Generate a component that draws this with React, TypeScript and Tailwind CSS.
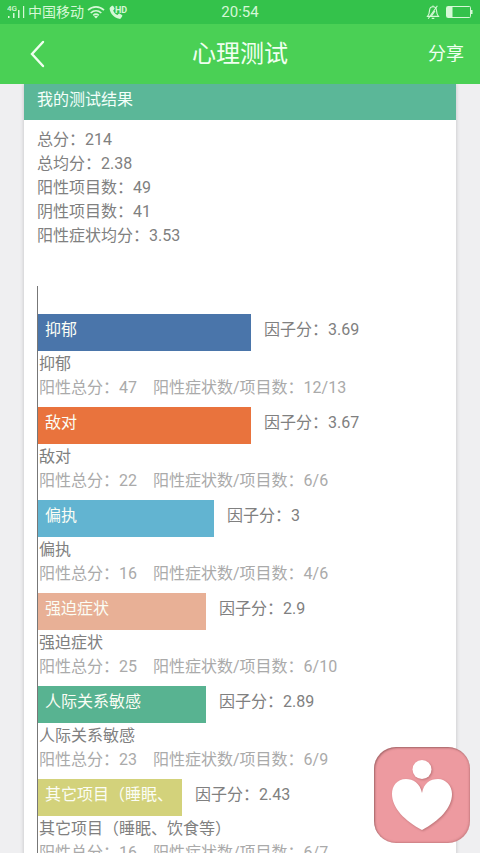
type Factor = {
  name: string;
  barLabel?: string;
  score: string;
  total: number;
  ratio: string;
  width: number;
  color: string;
};

const summary = [
  { label: "总分", value: "214" },
  { label: "总均分", value: "2.38" },
  { label: "阳性项目数", value: "49" },
  { label: "阴性项目数", value: "41" },
  { label: "阳性症状均分", value: "3.53" },
];

const factors: Factor[] = [
  { name: "抑郁", score: "3.69", total: 47, ratio: "12/13", width: 53.25, color: "bg-[#4a75aa]" },
  { name: "敌对", score: "3.67", total: 22, ratio: "6/6", width: 53.25, color: "bg-[#e9733d]" },
  { name: "偏执", score: "3", total: 16, ratio: "4/6", width: 44, color: "bg-[#62b4d1]" },
  { name: "强迫症状", score: "2.9", total: 25, ratio: "6/10", width: 42, color: "bg-[#e8b096]" },
  { name: "人际关系敏感", score: "2.89", total: 23, ratio: "6/9", width: 42, color: "bg-[#58b391]" },
  {
    name: "其它项目（睡眠、饮食等）",
    barLabel: "其它项目（睡眠、",
    score: "2.43",
    total: 16,
    ratio: "6/7",
    width: 36,
    color: "bg-[#d3d27b]",
  },
];

const SignalIcon = () => (
  <svg width="18" height="16" viewBox="0 0 18 16" fill="currentColor" aria-hidden="true">
    <text x="0" y="7" fontSize="8" fontWeight="500" fontFamily="Roboto, sans-serif">
      4G
    </text>
    <rect x="1" y="12" width="1.5" height="2" />
    <rect x="6" y="9" width="1.5" height="5" />
    <rect x="11" y="6" width="1.5" height="8" />
    <rect x="16" y="2" width="1.2" height="12" />
  </svg>
);

const WifiIcon = () => (
  <svg width="18" height="14" viewBox="0 0 18 14" fill="none" stroke="currentColor" strokeWidth="1.7" aria-hidden="true">
    <path d="M1 5.2C5.6 .7 12.4 .7 17 5.2" />
    <path d="M3.7 8c3.2-3 7.4-3 10.6 0" />
    <path d="M6.2 10.4c1.7-1.5 3.9-1.5 5.6 0" />
    <path d="M9 13.4 7 11.4c1.2-1 2.8-1 4 0z" fill="currentColor" stroke="none" />
  </svg>
);

const CallIcon = () => (
  <svg width="19" height="15" viewBox="0 0 19 15" fill="currentColor" aria-hidden="true">
    <path d="M1.2 2.2 3 .8c.4-.3.9-.2 1.2.2l1.3 2.2c.2.4.1.8-.2 1.1L4.2 5.5c.8 2 2.2 3.5 4.2 4.5l1.3-1.2c.3-.3.8-.3 1.1-.1l2.2 1.4c.4.3.5.8.2 1.2l-1.3 1.9c-.4.6-1 .8-1.7.6C5 12.6 1.5 9 .6 4c-.1-.7.1-1.4.6-1.8z" />
    <text x="6" y="8" fontSize="9" fontWeight="700" fontFamily="Roboto, sans-serif">
      HD
    </text>
  </svg>
);

const MutedBellIcon = () => (
  <svg width="14" height="15" viewBox="0 0 14 15" fill="none" stroke="currentColor" strokeWidth="1.1" aria-hidden="true">
    <path d="M7 1.8C4.6 1.8 3.6 3.6 3.5 5.6c-.1 3-.8 4.3-2 5.8h11c-1.2-1.5-1.9-2.8-2-5.8C10.4 3.6 9.4 1.8 7 1.8z" />
    <path d="M7 .6v1.2M5.7 13.4h2.6M11.4.8 2.2 13.8M9 6l-3.5 5" />
  </svg>
);

const BatteryIcon = () => (
  <svg width="27" height="12" viewBox="0 0 27 12" fill="none" aria-hidden="true">
    <rect x=".5" y=".5" width="24" height="11" rx="1" stroke="currentColor" />
    <rect x="1" y="1" width="5.5" height="10" fill="currentColor" />
    <rect x="25" y="4" width="1.5" height="4" fill="currentColor" />
  </svg>
);

const StatusBar = () => (
  <div className="relative flex h-6 shrink-0 items-center justify-between bg-[#34c24b] px-[7px] text-[#d5f8d6]">
    <div className="flex items-center">
      <SignalIcon />
      <span className="mx-[3px] text-sm leading-6">中国移动</span>
      <WifiIcon />
      <span className="ml-1">
        <CallIcon />
      </span>
    </div>
    <span className="absolute left-1/2 -translate-x-1/2 text-[15px] leading-6">20:54</span>
    <div className="flex items-center gap-1.5">
      <MutedBellIcon />
      <BatteryIcon />
    </div>
  </div>
);

const Header = () => (
  <header className="grid h-[60px] shrink-0 grid-cols-3 items-center bg-[#4ad055] px-4 text-[#f0fff0]">
    <button type="button" aria-label="返回" className="w-10 cursor-pointer pl-3.5">
      <svg width="15" height="28" viewBox="0 0 15 28" fill="none" stroke="currentColor" strokeWidth="2.4" strokeLinecap="round">
        <path d="M13 2 2 14l11 12" />
      </svg>
    </button>
    <h1 className="text-center text-2xl">心理测试</h1>
    <button type="button" className="cursor-pointer justify-self-end text-lg">
      分享
    </button>
  </header>
);

const FactorRow = ({ factor }: { factor: Factor }) => (
  <li className="mb-[7px]">
    <div className="mb-px flex">
      <div
        className={`h-[37px] shrink-0 whitespace-nowrap pl-[7px] pt-1 text-[#fbfdf5] ${factor.color}`}
        style={{ width: `${factor.width}%` }}
      >
        {factor.barLabel ?? factor.name}
      </div>
      <span className="ml-[13px] pt-1">因子分：{factor.score}</span>
    </div>
    <p className="pl-px">{factor.name}</p>
    <p className="flex gap-4 pl-px text-[#aaaaaa]">
      <span>阳性总分：{factor.total}</span>
      <span>阳性症状数/项目数：{factor.ratio}</span>
    </p>
  </li>
);

const App = () => {
  return (
    <div className="flex h-screen flex-col overflow-hidden bg-[#efeff1] font-['Roboto','Noto_Sans_CJK_SC',sans-serif]">
      <StatusBar />
      <Header />
      <main className="min-h-0 flex-1 overflow-y-auto px-6 [scrollbar-width:none]">
        <section className="bg-white text-base leading-6 text-[#808080] shadow-[0_0_4px_rgba(0,0,0,0.2)]">
          <h2 className="bg-[#5bb798] pb-2 pl-[13px] pt-1 text-[#f4fffa]">我的测试结果</h2>
          <div className="pl-[13px] pr-[18px] pt-2">
            {summary.map((item) => (
              <p key={item.label}>
                {item.label}：{item.value}
              </p>
            ))}
            <ul className="mt-[38px] border-l border-[#777777] pt-7">
              {factors.map((factor) => (
                <FactorRow key={factor.name} factor={factor} />
              ))}
            </ul>
          </div>
        </section>
      </main>
      <button
        type="button"
        aria-label="心理服务"
        className="fixed bottom-2.5 right-2.5 size-24 cursor-pointer rounded-[22px] bg-[#ed9aa0] shadow-[inset_1px_1px_2px_rgba(90,50,50,0.5),inset_-1px_-1px_2px_rgba(120,60,60,0.25)]"
      >
        <svg viewBox="0 0 96 96" className="size-full drop-shadow-[1px_1px_1px_rgba(120,60,60,0.4)]" fill="white">
          <circle cx="48" cy="22.5" r="9.5" />
          <path d="M48 46C46 36 39 32 32 32c-9 0-14 7-14 15 0 14 13 27 30 36 17-9 30-22 30-36 0-8-6-15-14-15-8 0-14 4-16 14z" />
        </svg>
      </button>
    </div>
  );
};

export default App;
